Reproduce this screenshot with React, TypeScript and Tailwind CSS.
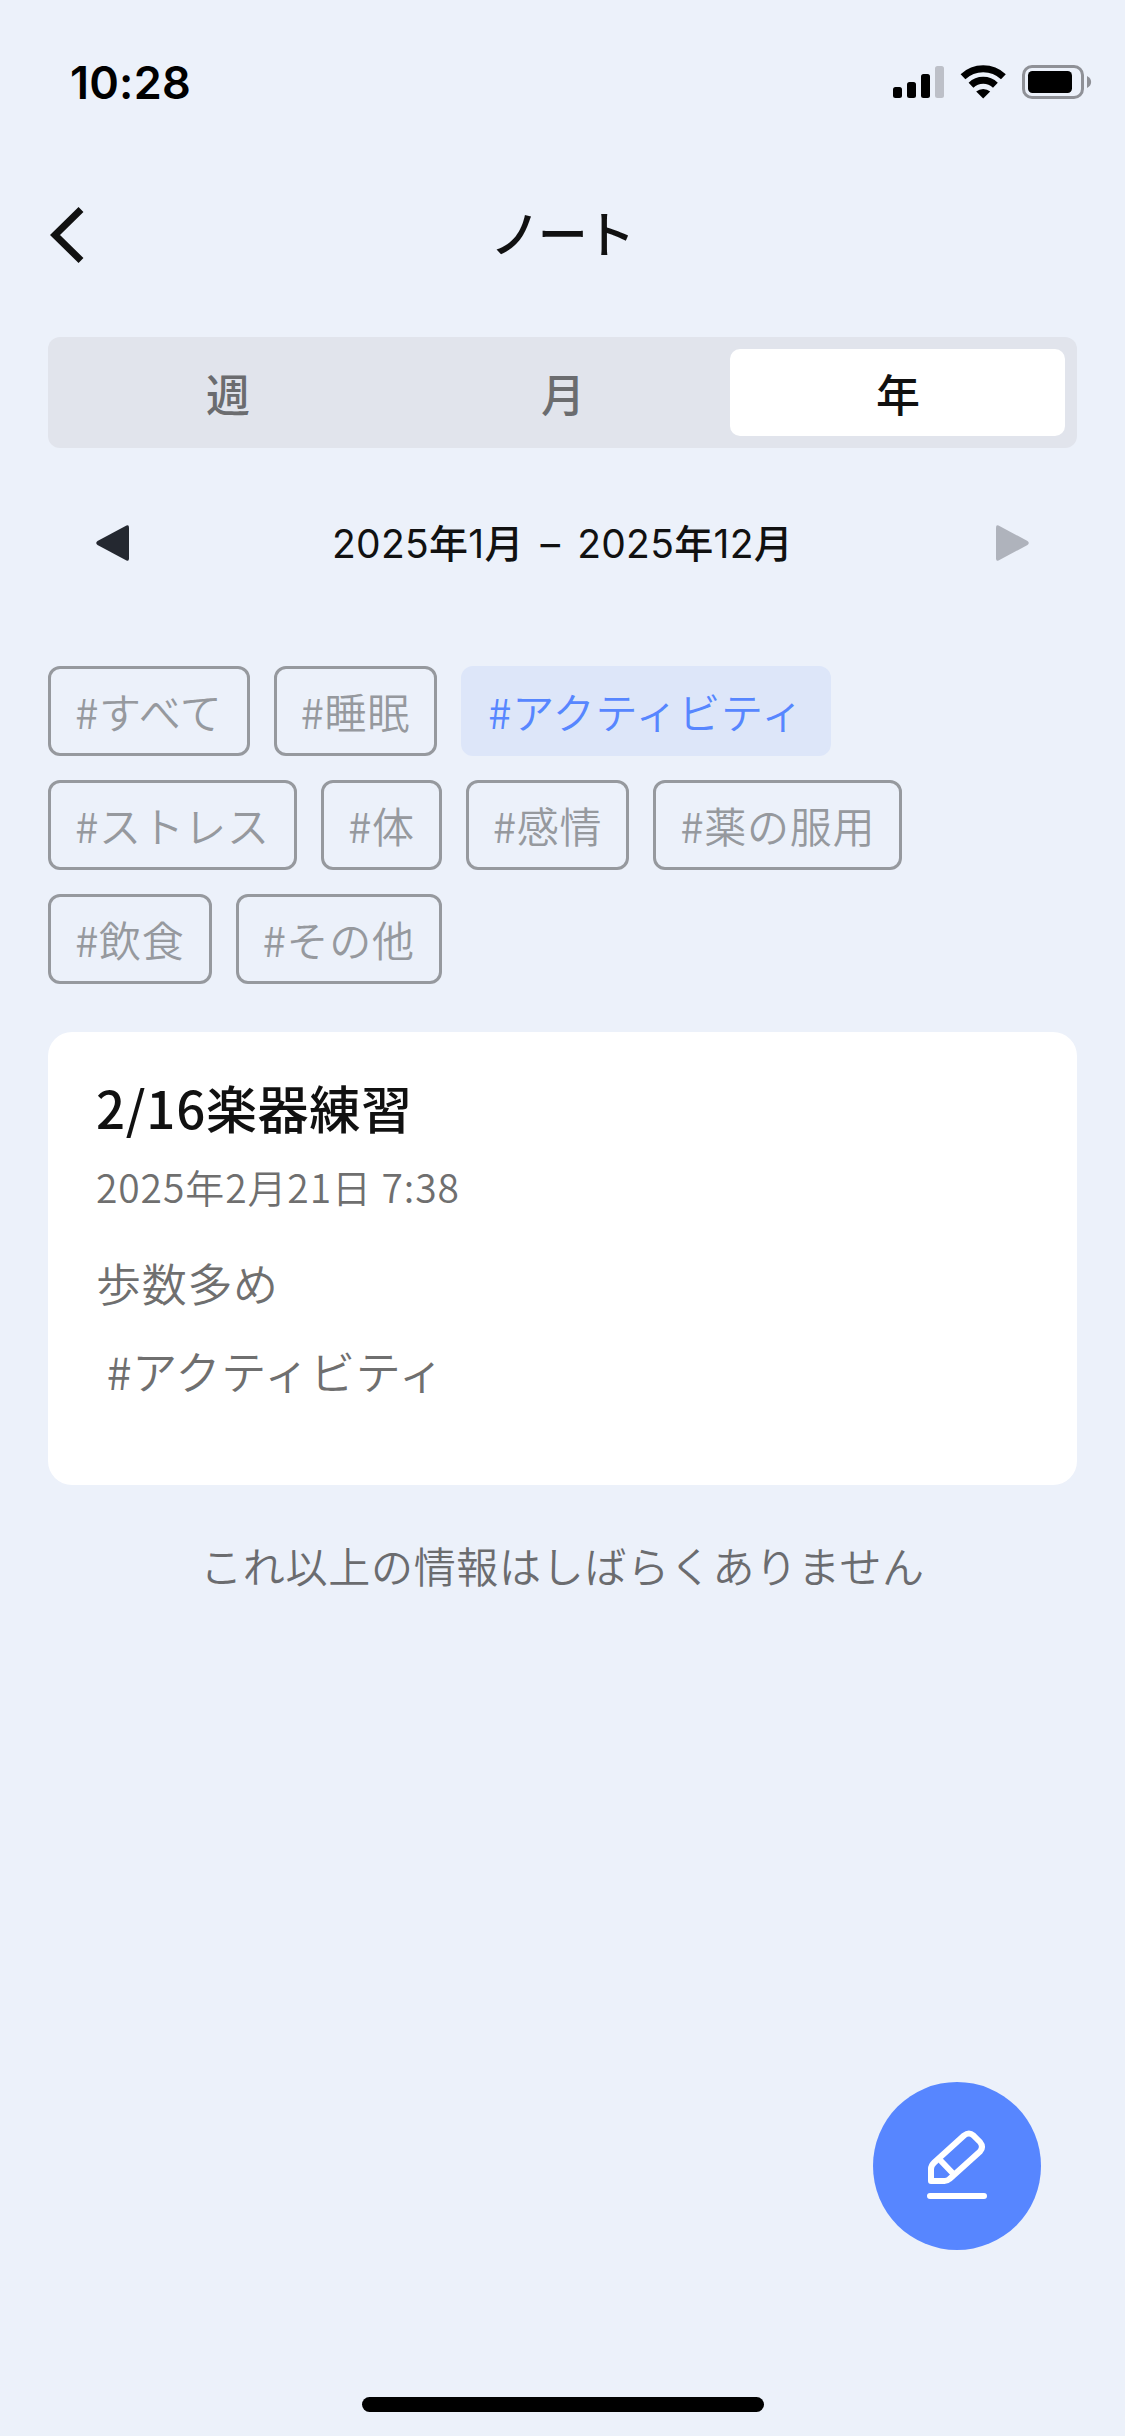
import React, { useState } from 'react';

const PERIODS = ['週', '月', '年'];

const TAGS = [
  ['すべて', '睡眠', 'アクティビティ'],
  ['ストレス', '体', '感情', '薬の服用'],
  ['飲食', 'その他'],
];

const StatusBar: React.FC = () => (
  <div className="h-[164px] pl-[70px] pr-[33px] flex items-center justify-between text-black">
    <span className="font-['Inter'] font-semibold text-[45px] leading-none tracking-[0.2px]">10:28</span>
    <svg width="200" height="36" viewBox="892 64 200 36">
      <rect x="893" y="87" width="9" height="11" rx="2.5" />
      <rect x="907" y="82" width="9" height="16" rx="2.5" />
      <rect x="921" y="74" width="9" height="24" rx="2.5" />
      <rect x="935" y="66" width="9" height="32" rx="2.5" fill="#bdc0c8" />
      <g fill="none" stroke="#000" strokeWidth="7">
        <path d="M963 76.8a29.5 29.5 0 0 1 40.4 0" />
        <path d="M971 85.2a17.8 17.8 0 0 1 24.4 0" />
      </g>
      <path d="M976.2 91.6a10.6 10.6 0 0 1 14 0L983.2 98.4z" />
      <rect x="1023.5" y="66.5" width="59" height="31" rx="8.5" fill="none" stroke="#8f9197" strokeWidth="3" />
      <rect x="1028" y="71" width="44" height="22" rx="4.5" />
      <path d="M1087 76c5.500 2.500 5.500 9.500 0 12z" fill="#8f9197" />
    </svg>
  </div>
);

const YearMonth: React.FC<{ year: number; month: number }> = ({ year, month }) => (
  <>
    {year}<span className="font-medium">年</span>{month}<span className="font-medium">月</span>
  </>
);

const App: React.FC = () => {
  const [period, setPeriod] = useState('年');
  const [activeTag, setActiveTag] = useState('アクティビティ');

  return (
    <div className="relative w-[1125px] h-[2436px] overflow-hidden bg-[#ecf1fa] text-[#111111] font-['Noto_Sans_CJK_JP',sans-serif]">
      <StatusBar />

      <header className="h-[141px] px-12 grid grid-cols-[1fr_auto_1fr] items-center">
        <button aria-label="戻る">
          <svg width="38" height="56" viewBox="0 0 38 56" fill="none" stroke="#111" strokeWidth="7">
            <path d="M33 2.500 7 28l26 25.500" />
          </svg>
        </button>
        <h1 className="pb-[8px] pr-[2px] text-[50px] leading-none tracking-[-2.5px] font-medium">ノート</h1>
      </header>

      <main className="px-12 pt-8">
        <div className="h-[111px] p-3 flex rounded-xl bg-[#e1e4ec]">
          {PERIODS.map((p) => (
            <button
              key={p}
              onClick={() => setPeriod(p)}
              className={`flex-1 pl-px rounded-[10px] text-[44px] leading-none font-medium ${p === period ? 'bg-white text-[#111111]' : 'text-[#6b6c6f]'}`}
            >
              {p}
            </button>
          ))}
        </div>

        <div className="h-[190px] px-12 flex items-center justify-between">
          <svg width="33" height="36" viewBox="0 0 33 36" fill="#242830">
            <path d="M30.500 .5Q33-.5 33 2.500v31q0 3-2.500 2L1.500 20q-2.500-2 0-4z" />
          </svg>
          <span className="font-['Inter','Noto_Sans_CJK_JP',sans-serif] font-normal text-[39px] leading-none tracking-[0.3px] [word-spacing:5.5px]">
            <YearMonth year={2025} month={1} /> – <YearMonth year={2025} month={12} />
          </span>
          <svg width="33" height="36" viewBox="0 0 33 36" fill="#afb3bc">
            <path d="M2.500 .5Q0-.5 0 2.500v31q0 3 2.500 2L31.500 20q2.500-2 0-4z" />
          </svg>
        </div>

        <div className="pt-7 flex flex-col gap-6">
          {TAGS.map((row) => (
            <div key={row[0]} className="flex gap-6">
              {row.map((tag) => (
                <button
                  key={tag}
                  onClick={() => setActiveTag(tag)}
                  className={`h-[90px] px-[24.2px] border-3 rounded-xl text-[42px] leading-none tracking-[0.7px] font-[350] whitespace-nowrap ${tag === activeTag ? 'border-[#dde6f9] bg-[#dde6f9] text-[#5786ff]' : 'border-[#96999e] text-[#96999e]'}`}
                >
                  #{tag}
                </button>
              ))}
            </div>
          ))}
        </div>

        <article className="mt-12 h-[453px] px-12 pt-[45px] rounded-3xl bg-white text-[#6f6f6f]">
          <h2 className="text-[51px] leading-[60px] tracking-[0.7px] font-medium text-[#111111]">2/16楽器練習</h2>
          <p className="mt-[25px] text-[39px] leading-[48px] tracking-[0.9px] font-[350]">2025年2月21日 7:38</p>
          <p className="mt-[43px] text-[45px] leading-[60px] tracking-[0.7px] font-[350]">歩数多め</p>
          <p className="mt-[28px] text-[45px] leading-[60px] tracking-[0.7px] font-[350] whitespace-pre"> #アクティビティ</p>
        </article>

        <p className="mt-[50px] text-center text-[42px] leading-[60px] tracking-[0.7px] font-[350] text-[#6b6c6f]">これ以上の情報はしばらくありません</p>
      </main>

      <button aria-label="ノートを書く" className="absolute left-[873px] top-[2082px] size-[168px] rounded-full bg-[#5786ff]">
        <svg width="168" height="168" viewBox="0 0 168 168" fill="none" stroke="#fff" strokeWidth="6" strokeLinecap="round" strokeLinejoin="round">
          <path d="M58 99V87q0-3.500 3-6.300L91 53.500q5-4 9.500 0l6.500 6.500q4 5 0 9.500L76.500 97q-2 2-5 2z" />
          <path d="M68.500 79.500 80 91.500M57 114h54" />
        </svg>
      </button>

      <div className="absolute left-[362px] top-[2397px] w-[402px] h-[15px] rounded-full bg-black" />
    </div>
  );
};

export default App;
